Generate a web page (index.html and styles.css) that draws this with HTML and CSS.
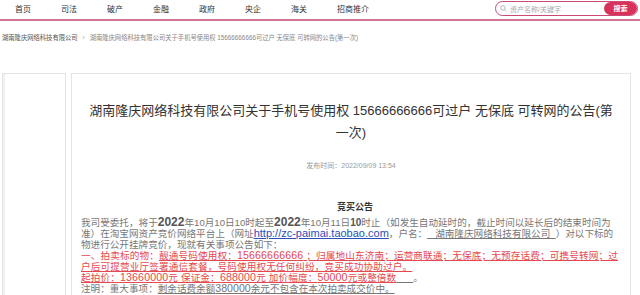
FILE: index.html
```html
<!DOCTYPE html>
<html lang="zh-CN">
<head>
<meta charset="utf-8">
<title>公告</title>
<link rel="stylesheet" href="styles.css">
</head>
<body>
<header class="topbar">
  <nav class="nav">
    <a>首页</a><a>司法</a><a>破产</a><a>金融</a><a>政府</a><a>央企</a><a>海关</a><a>招商推介</a>
  </nav>
  <div class="search">
    <svg class="search-icon" viewBox="0 0 10 10" width="7" height="7"><circle cx="4.2" cy="4.2" r="3.2" fill="none" stroke="#999" stroke-width="1"/><line x1="6.6" y1="6.6" x2="9.2" y2="9.2" stroke="#999" stroke-width="1"/></svg>
    <span class="placeholder">资产名称/关键字</span>
    <span class="search-btn">搜索</span>
  </div>
</header>

<div class="crumb"><span class="crumb-a">湖南隆庆网络科技有限公司</span><span class="crumb-sep">›</span><span class="crumb-b">湖南隆庆网络科技有限公司关于手机号使用权 15666666666可过户 无保底 可转网的公告(第一次)</span></div>

<div class="layout">
  <aside class="side"></aside>
  <main class="panel">
    <h1 class="title">湖南隆庆网络科技有限公司关于手机号使用权 15666666666可过户 无保底 可转网的公告(第一次)</h1>
    <p class="date">发布时间：2022/09/09 13:54</p>
    <h2 class="notice-title">竞买公告</h2>
    <div class="body">
      <p>我司受委托，将于<b class="big">2022</b>年10月10日10时起至<b class="big">2022</b>年10月11日<b class="mid">10</b>时止（如发生自动延时的，截止时间以延长后的结束时间为准）在淘宝网资产竞价网络平台上（网址<a class="link">http://zc-paimai.taobao.com</a>，户名：<u>&nbsp;&nbsp;&nbsp;湖南隆庆网络科技有限公司&nbsp;&nbsp;</u>）对以下标的物进行公开挂牌竞价，现就有关事项公告如下：</p>
      <p class="red">一、拍卖标的物：<u>靓通号码使用权：<span class="num">15666666666</span> ；归属地山东济南；运营商联通；无保底；无预存话费；可携号转网；过户后可提营业厅签署通信套餐，号码使用权无任何纠纷，竞买成功协助过户。</u></p>
      <p class="red"><u>起拍价：<span class="num">13660000</span>元 保证金：<span class="num">688000</span>元 加价幅度：<span class="num">50000</span>元或整倍数</u><u class="gray">&nbsp;&nbsp;&nbsp;&nbsp;&nbsp;&nbsp;</u><span class="gray">。</span></p>
      <p>注明：重大事项：<u>剩余话费余额<span class="num">380000</span>余元不包含在本次拍卖成交价中。</u></p>
    </div>
  </main>
</div>
</body>
</html>
```

FILE: styles.css
```css
* { box-sizing: border-box; }
body {
  margin: 0;
  background: #fff;
  color: #333;
  font-family: "Liberation Sans", "Noto Sans CJK SC", sans-serif;
}
.topbar {
  display: flex;
  align-items: center;
  justify-content: space-between;
  height: 21px;
  border-bottom: 2px solid #d27597;
}
.nav {
  display: flex;
  font-size: 8px;
  color: #333;
}
.nav a {
  padding: 0 15px;
  line-height: 19px;
}
.search {
  display: flex;
  align-items: center;
  width: 143px;
  height: 15px;
  margin-right: 2px;
  margin-bottom: 2px;
  border: 1px solid #c94a74;
  border-radius: 8px;
  padding-left: 4px;
}
.search-icon { flex: none; }
.placeholder {
  flex: 1;
  margin-left: 3px;
  font-size: 7px;
  color: #aaa;
}
.search-btn {
  height: 13px;
  width: 33px;
  border-radius: 7px;
  background: #d8325c;
  color: #fff;
  font-size: 7px;
  font-weight: bold;
  line-height: 13px;
  text-align: center;
}
.crumb {
  margin-top: 12px;
  padding-left: 2px;
  font-size: 6.3px;
  line-height: 10px;
  white-space: nowrap;
}
.crumb-a { color: #555; }
.crumb-sep { color: #999; margin: 0 5px; }
.crumb-b { color: #888; }
.layout {
  display: flex;
  gap: 5px;
  margin-top: 30px;
  padding-left: 2px;
  height: 230px;
}
.side {
  width: 64px;
  border: 1px solid #e4e4e4;
  box-shadow: inset 2px 0 0 #f0f0f0;
}
.panel {
  width: 560px;
  border: 1px solid #e4e4e4;
  border-bottom: 0;
  padding: 0 9px;
}
.title {
  margin: 26px 0 0;
  font-size: 13px;
  line-height: 22px;
  font-weight: normal;
  color: #333;
  text-align: center;
  padding: 0 4px;
}
.date {
  margin: 17px 0 0;
  font-size: 7px;
  line-height: 10px;
  color: #999;
  text-align: center;
}
.notice-title {
  margin: 30px 0 0;
  font-size: 9px;
  line-height: 12px;
  color: #333;
  text-align: center;
  padding-left: 8px;
}
.body {
  margin-top: 4px;
  font-size: 9.6px;
  line-height: 11px;
  color: #777;
}
.body p { margin: 0; }
.body u { text-decoration-thickness: 1px; text-underline-offset: 1px; }
.big {
  font-size: 12px;
  line-height: 10px;
  color: #555;
}
.mid {
  font-size: 10px;
  line-height: 10px;
  color: #555;
}
.num { font-size: 10.6px; line-height: 10px; }
.link {
  color: #2a4fb8;
  text-decoration: underline;
  font-size: 11px;
  line-height: 10px;
}
.red { color: #e5494f; letter-spacing: 0.15px; }
.gray { color: #777; }
```
